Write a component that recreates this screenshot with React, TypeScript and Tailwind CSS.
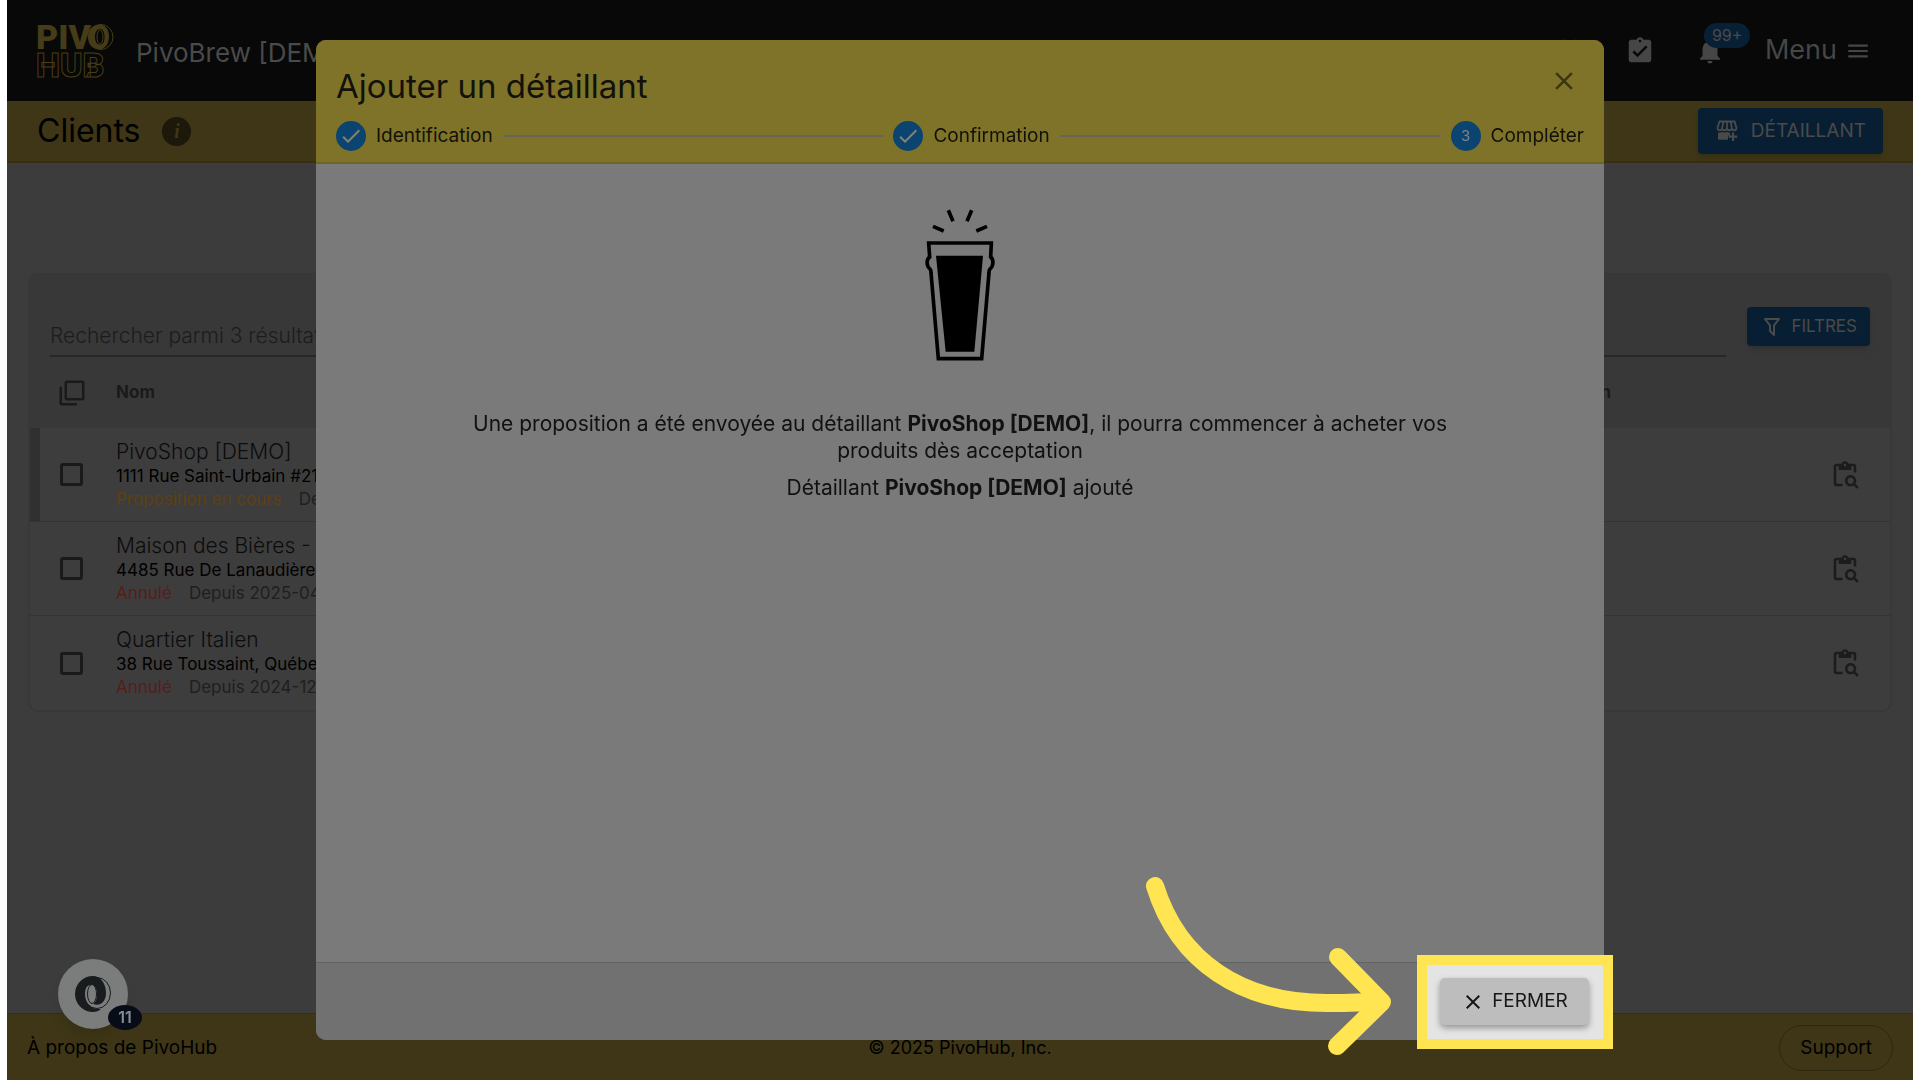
import { useState } from "react"
import {
  MdAssignmentTurnedIn,
  MdCheck,
  MdClose,
  MdFavoriteBorder,
  MdMenu,
  MdNotifications,
  MdOutlineContentPasteSearch,
} from "react-icons/md"

const clients = [
  {
    id: 1,
    name: "PivoShop [DEMO]",
    address: "1111 Rue Saint-Urbain #211",
    status: "Proposition en cours",
    since: "Depuis 2025-04",
    pending: true,
  },
  {
    id: 2,
    name: "Maison des Bières - Lanaudière",
    address: "4485 Rue De Lanaudière",
    status: "Annulé",
    since: "Depuis 2025-04",
    pending: false,
  },
  {
    id: 3,
    name: "Quartier Italien",
    address: "38 Rue Toussaint, Québec",
    status: "Annulé",
    since: "Depuis 2024-12-",
    pending: false,
  },
]

const steps = [
  { label: "Identification", done: true },
  { label: "Confirmation", done: true },
  { label: "Compléter", done: false },
]

function Logo() {
  return (
    <svg className="h-[54px] w-[78px] overflow-visible" viewBox="0 0 78 54" role="img" aria-label="PivoHub">
      <g fontFamily="Roboto, sans-serif" fontWeight="900" fontSize="34">
        <text x="-1" y="25" fill="#463d18">PIV</text>
        <text x="-1" y="53" fill="none" stroke="#463d18" strokeWidth="1">HUB</text>
      </g>
      <ellipse cx="64" cy="13" rx="12" ry="12.5" fill="#080808" stroke="#463d18" strokeWidth="1" />
      <path
        fillRule="evenodd"
        fill="#463d18"
        d="M62 0.500C55 1 51 6 51 13S55 25 62 25.500C69 25 72 19 72 12S68 0.500 62 0.500ZM63 5C66 5 67.500 8 67.500 13S66 20.500 63 20.500S58 18 58 13S60 5 63 5Z"
      />
      <ellipse cx="63" cy="13" rx="3" ry="7" fill="none" stroke="#463d18" strokeWidth="1" />
    </svg>
  )
}

function StorePlusIcon() {
  return (
    <svg className="h-6 w-6" viewBox="0 0 24 24" fill="none" stroke="currentColor" strokeWidth="1.8">
      <path d="M4.500 2.500h15l2 6.500c0 3-4.600 3-4.600 0c0 3-4.900 3-4.900 0c0 3-4.900 3-4.900 0c0 3-4.600 3-4.600 0zM8.500 2.500L7.100 9M12 2.500v6.500M15.500 2.500l1.400 6.500" />
      <path fill="currentColor" stroke="none" d="M3 13.500c1.500.5 3 .2 4.200-.8c1.400 1.200 3.400 1.200 4.800 0c.9.800 2 1.100 3 1v3h-2v4H4a1 1 0 0 1-1-1z" />
      <path strokeWidth="2.200" d="M18 13.500v8.500M13.700 17.700h8.600" />
    </svg>
  )
}

function FilterIcon() {
  return (
    <svg className="h-6 w-6" viewBox="0 0 24 24" fill="currentColor">
      <path d="M15 19.880C15.040 20.180 14.940 20.500 14.710 20.710C14.320 21.100 13.690 21.100 13.300 20.710L9.290 16.700C9.060 16.470 8.960 16.160 9 15.870V10.750L4.210 4.620C3.870 4.190 3.950 3.560 4.380 3.220C4.570 3.080 4.780 3 5 3H19C19.220 3 19.430 3.080 19.620 3.220C20.050 3.560 20.130 4.190 19.790 4.620L15 10.750V19.880M7.040 5L11 10.060V15.580L13 17.580V10.050L16.960 5H7.040Z" />
    </svg>
  )
}

function SelectAllIcon() {
  return (
    <svg className="h-[30px] w-[30px]" viewBox="0 0 24 24" fill="currentColor">
      <path d="M20,16V4H8V16H20M22,16A2,2 0 0,1 20,18H8C6.890,18 6,17.100 6,16V4C6,2.890 6.890,2 8,2H20A2,2 0 0,1 22,4V16M16,20V22H4A2,2 0 0,1 2,20V7H4V20H16Z" />
    </svg>
  )
}

function BeerGlass() {
  return (
    <svg className="h-[153px] w-[70px]" viewBox="135 55 210 459" fill="none" stroke="#000" strokeWidth="11">
      <path d="M205 59l14 33M275 59l-14 33M159 107l32 14M321 107l-32 14" />
      <path d="M146 157H334L332 199C341 206 342 226 329 236C327 240 327 242 327 246L305 504H175L153 246C153 242 153 240 151 236C138 226 139 206 149 199Z" />
      <path fill="#000" stroke="none" d="M168 195H309L283 483H197Z" />
    </svg>
  )
}

function ChatLogo() {
  return (
    <svg className="h-9 w-9" viewBox="0 0 36 36">
      <ellipse cx="22" cy="17" rx="13.500" ry="15.500" fill="none" stroke="#191c1e" strokeWidth="1" />
      <path
        fill="#191c1e"
        fillRule="evenodd"
        d="M18 0A18 18 0 1 0 18 36C21 36 24 35 26 33C16 34 10 27 10 18C10 12 12 9 16 9C20 9 22 13 22 18C22 22 21 26 18 28C26 31 31 25 31 17C31 8 26 0 18 0Z"
      />
      <ellipse cx="17" cy="18" rx="4.500" ry="9.500" fill="#7b7d7c" stroke="#191c1e" strokeWidth="1" />
    </svg>
  )
}

export default function App() {
  const [search, setSearch] = useState("")

  return (
    <div className="min-h-screen bg-white px-[7px] font-['Inter','Liberation_Sans',sans-serif]">
      <div className="flex min-h-screen flex-col bg-[#3c3c3c]">
        {/* Top bar */}
        <header className="flex h-[101px] items-center bg-[#080808] pr-[42px] pl-[30px] text-[27px] text-[#4a4a4a]">
          <Logo />
          <span className="ml-[21px] pt-1 text-[26px]">PivoBrew [DEMO]</span>
          <nav className="ml-auto flex items-center text-[#464646]">
            <a href="#favoris" aria-label="Favoris"><MdFavoriteBorder size={30} /></a>
            <a href="#taches" aria-label="Tâches" className="ml-[40px]"><MdAssignmentTurnedIn size={30} /></a>
            <button aria-label="Notifications" className="relative ml-[40px]">
              <MdNotifications size={30} />
              <span className="absolute -top-[13px] left-[9px] rounded-full bg-[#082036] px-2 text-base leading-[25px] text-[#4a4a4a]">99+</span>
            </button>
            <button className="ml-[40px] flex items-center gap-2">
              Menu
              <MdMenu size={26} />
            </button>
          </nav>
        </header>

        {/* Page title */}
        <div className="flex h-[62px] items-center border-b-2 border-[#363013] bg-[#3e3616] px-[30px]">
          <h1 className="text-[32px] text-black">Clients</h1>
          <button aria-label="Informations" className="ml-[22px] h-[29px] w-[29px] rounded-full bg-[#1c180a] font-['Liberation_Serif',serif] text-xl leading-[28px] font-bold text-[#3e3616] italic">
            i
          </button>
          <button className="ml-auto flex h-[46px] items-center gap-3 rounded-[4px] bg-[#081f33] px-[17px] text-[19px] text-[#4a4a4a] shadow-md">
            <StorePlusIcon />
            DÉTAILLANT
          </button>
        </div>

        {/* Clients list */}
        <main className="px-[21px] pt-[110px]">
          <div className="overflow-hidden rounded-[10px] border-2 border-[#383838] bg-[#383838]">
            <div className="flex items-start gap-[21px] px-5 pt-8">
              <input
                aria-label="Rechercher"
                value={search}
                onChange={(e) => setSearch(e.target.value)}
                placeholder="Rechercher parmi 3 résultats"
                className="h-[50px] flex-1 border-b-2 border-[#272727] bg-transparent pt-2 text-[21px] font-light placeholder:text-[#1c1c1c]"
              />
              <button className="flex h-[39px] items-center gap-[7px] rounded-[4px] bg-[#081f33] px-[13px] text-[17px] text-[#4a4a4a] shadow-md">
                <FilterIcon />
                FILTRES
              </button>
            </div>
            <table className="w-full table-fixed border-separate border-spacing-0 text-left">
              <colgroup>
                <col className="w-[86px]" />
                <col />
                <col className="w-[243px]" />
                <col className="w-[90px]" />
              </colgroup>
              <thead>
                <tr className="h-[71px] text-[17px] text-[#1a1a1a]">
                  <th className="pl-[27px]">
                    <button aria-label="Tout sélectionner" className="block"><SelectAllIcon /></button>
                  </th>
                  <th>Nom</th>
                  <th>Action</th>
                  <th />
                </tr>
              </thead>
              <tbody className="[&>tr:not(:last-child)>td]:border-b [&>tr>td]:border-[#343434]">
                {clients.map((client) => (
                  <tr key={client.id} className="h-[94px] bg-[#3d3d3d]">
                    <td className={client.pending ? "pl-[30px] shadow-[inset_10px_0_0_#303030]" : "pl-[30px]"}>
                      <input
                        type="checkbox"
                        aria-label={client.name}
                        className="block h-[23px] w-[23px] appearance-none rounded-[3px] border-[3px] border-[#1a1a1a]"
                      />
                    </td>
                    <td className="whitespace-nowrap">
                      <p className="text-[21px] leading-[25px] font-light text-[#0c0c0c]">{client.name}</p>
                      <p className="text-[17px] leading-[24px] text-black">{client.address}</p>
                      <p className="flex gap-[17px] text-[17px] leading-[23px]">
                        <span className={client.pending ? "text-[#5e4012]" : "text-[#551d1a]"}>{client.status}</span>
                        <span className="text-[#1f1f1f]">{client.since}</span>
                      </p>
                    </td>
                    <td />
                    <td>
                      <button aria-label={"Consulter " + client.name} className="mx-auto block text-[#1c1c1c]">
                        <MdOutlineContentPasteSearch size={30} />
                      </button>
                    </td>
                  </tr>
                ))}
              </tbody>
            </table>
          </div>
        </main>

        <footer className="mt-auto grid h-[67px] grid-cols-3 items-center border-t border-[#353014] bg-[#3e3616] px-[20px] pt-[2px] text-[19px] text-black">
          <a href="#apropos">À propos de PivoHub</a>
          <span className="text-center text-lg">© 2025 PivoHub, Inc.</span>
          <button className="h-[46px] justify-self-end rounded-full border border-[#2d270f] px-5">Support</button>
        </footer>
      </div>

      {/* Chat launcher */}
      <button aria-label="Messages" className="fixed bottom-[51px] left-[58px] flex h-[70px] w-[70px] items-center justify-center rounded-full bg-[#7b7d7c] shadow-lg">
        <ChatLogo />
        <span className="absolute top-[46px] left-[50px] h-[25px] w-[34px] rounded-[50%] bg-[#060c18] text-base leading-[25px] font-semibold text-[#8a8d90]">11</span>
      </button>

      {/* Dialog */}
      <div className="pointer-events-none fixed inset-0 flex justify-center py-10">
        <div role="dialog" aria-labelledby="dialog-title" className="pointer-events-auto flex w-full max-w-[1288px] flex-col rounded-[10px] bg-[#7a7a7a]">
          <div className="rounded-t-[10px] border-b-2 border-[#6f6524] bg-[#7f7329] px-5">
            <div className="flex h-[81px] items-start justify-between pt-[26px] pr-[5px]">
              <h2 id="dialog-title" className="text-[33px] leading-[40px] text-[#12110a]">Ajouter un détaillant</h2>
              <button aria-label="Fermer la fenêtre" className="text-[#3b3513]"><MdClose size={30} /></button>
            </div>
            <ol className="flex h-[41px] items-start">
              {steps.map((step, i) => (
                <li key={step.label} className={i > 0 ? "flex flex-auto items-center gap-[10px]" : "flex items-center gap-[10px]"}>
                  {i > 0 && <span className="ml-[10px] h-[2px] flex-1 bg-[#66645a]" />}
                  <span className="flex h-[30px] w-[30px] items-center justify-center rounded-full bg-[#0b4470] text-[15px] text-[#83838a]">
                    {step.done ? <MdCheck size={24} color="#85826f" /> : i + 1}
                  </span>
                  <span className="text-[19px] leading-[30px] text-[#12110a]">{step.label}</span>
                </li>
              ))}
            </ol>
          </div>

          <div className="flex flex-1 flex-col items-center pt-[45px] text-center text-[21px] leading-[27px] text-[#111]">
            <BeerGlass />
            <p className="mt-12 max-w-[1030px]">
              Une proposition a été envoyée au détaillant <b>PivoShop [DEMO]</b>, il pourra commencer à acheter vos produits dès acceptation
            </p>
            <p className="mt-[10px]">
              Détaillant <b>PivoShop [DEMO]</b> ajouté
            </p>
          </div>

          <div className="flex h-[78px] items-center justify-end rounded-b-[10px] border-t border-[#636363] bg-[#717171] px-[15px]">
            <div className="relative">
              <div className="absolute -top-[23px] -right-[24px] -bottom-[24px] -left-[23px] border-[10px] border-[#ffe551] bg-[#e4e4e4]" />
              <svg className="absolute -top-[108px] -left-[300px] h-[190px] w-[260px]" viewBox="1140 870 260 190" fill="none" stroke="#ffe551" strokeWidth="18" strokeLinecap="round" strokeLinejoin="round">
                <path d="M1155 886C1178 960 1240 1005 1333 1003C1350 1003 1365 1002 1381 1002" />
                <path d="M1338 957L1382 1002L1337 1046" />
              </svg>
              <button className="relative flex h-[47px] w-[149px] items-center justify-center gap-[7px] rounded-[5px] bg-[#bdbdbd] text-[19px] text-[#161616] shadow-[0_3px_6px_rgba(0,0,0,0.35)]">
                <MdClose size={24} />
                FERMER
              </button>
            </div>
          </div>
        </div>
      </div>
    </div>
  )
}
